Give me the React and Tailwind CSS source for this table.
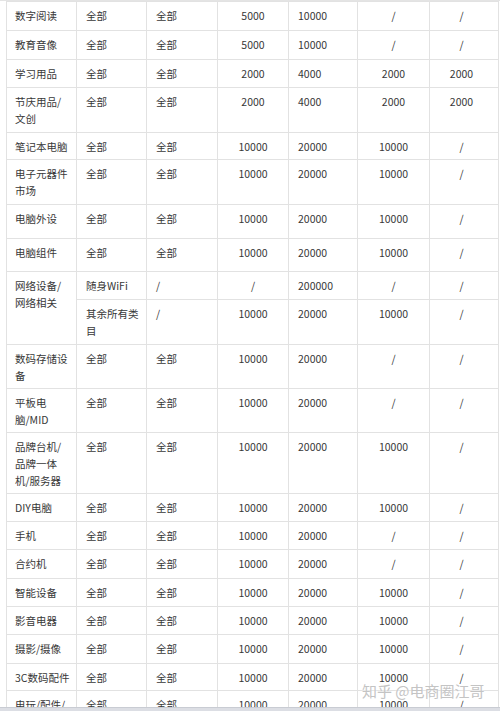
import React from "react";

const rows = [
  { h: "h-[29px]", c: ["数字阅读", "全部", "全部", "5000", "10000", "/", "/"] },
  { h: "h-[29px]", c: ["教育音像", "全部", "全部", "5000", "10000", "/", "/"] },
  { h: "h-[28px]", c: ["学习用品", "全部", "全部", "2000", "4000", "2000", "2000"] },
  { h: "h-[45px]", c: [["节庆用品/", "文创"], "全部", "全部", "2000", "4000", "2000", "2000"] },
  { h: "h-[27px]", c: ["笔记本电脑", "全部", "全部", "10000", "20000", "10000", "/"] },
  { h: "h-[45px]", c: [["电子元器件", "市场"], "全部", "全部", "10000", "20000", "10000", "/"] },
  { h: "h-[34px]", c: ["电脑外设", "全部", "全部", "10000", "20000", "10000", "/"] },
  { h: "h-[33px]", c: ["电脑组件", "全部", "全部", "10000", "20000", "10000", "/"] },
  { h: "h-[28px]", span: true, c: [["网络设备/", "网络相关"], "随身WiFi", "/", "/", "200000", "/", "/"] },
  { h: "h-[45px]", sub: true, c: [["其余所有类", "目"], "/", "10000", "20000", "10000", "/"] },
  { h: "h-[44px]", c: [["数码存储设", "备"], "全部", "全部", "10000", "20000", "/", "/"] },
  { h: "h-[44px]", c: [["平板电", "脑/MID"], "全部", "全部", "10000", "20000", "/", "/"] },
  { h: "h-[61px]", c: [["品牌台机/", "品牌一体", "机/服务器"], "全部", "全部", "10000", "20000", "10000", "/"] },
  { h: "h-[28px]", c: ["DIY电脑", "全部", "全部", "10000", "20000", "10000", "/"] },
  { h: "h-[28px]", c: ["手机", "全部", "全部", "10000", "20000", "/", "/"] },
  { h: "h-[29px]", c: ["合约机", "全部", "全部", "10000", "20000", "/", "/"] },
  { h: "h-[28px]", c: ["智能设备", "全部", "全部", "10000", "20000", "10000", "/"] },
  { h: "h-[28px]", c: ["影音电器", "全部", "全部", "10000", "20000", "10000", "/"] },
  { h: "h-[29px]", c: ["摄影/摄像", "全部", "全部", "10000", "20000", "10000", "/"] },
  { h: "h-[27px]", c: ["3C数码配件", "全部", "全部", "10000", "20000", "10000", "/"] },
  { h: "h-[28px]", c: [["电玩/配件/", "游戏"], "全部", "全部", "10000", "20000", "10000", "/"] },
];

const align = [
  "pl-[8px] text-left",
  "pl-[9px] text-left",
  "pl-[9px] text-left",
  "text-center",
  "pl-[9px] text-left",
  "text-center",
  "text-center pr-[5px]",
];

function Txt({ v }) {
  if (Array.isArray(v)) {
    return v.map((s, i) => (
      <React.Fragment key={i}>
        {i > 0 && <br />}
        {s}
      </React.Fragment>
    ));
  }
  return v;
}

export default function App() {
  return (
    <div
      className="w-[500px] h-[711px] overflow-hidden bg-white flex flex-col relative text-[#383838]"
      style={{ fontFamily: '"Noto Sans CJK SC", "Noto Sans", sans-serif' }}
    >
      <div className="h-[1px] bg-[#e4e4e4] shrink-0" />
      <div className="flex-1 overflow-hidden pl-[6px] pr-[2px]">
        <table className="table-fixed border-collapse w-[492px] text-[10.5px] leading-[17px]">
          <colgroup>
            <col className="w-[70px]" />
            <col className="w-[70px]" />
            <col className="w-[71px]" />
            <col className="w-[71px]" />
            <col className="w-[69px]" />
            <col className="w-[72px]" />
            <col className="w-[69px]" />
          </colgroup>
          <tbody>
            {rows.map((r, ri) => {
              if (r.sub) {
                return (
                  <tr key={ri} className={r.h}>
                    {r.c.map((v, ci) => (
                      <td
                        key={ci}
                        className={`border border-[#e2e2e2] align-top pt-[5px] whitespace-nowrap ${align[ci + 1]}`}
                      >
                        <Txt v={v} />
                      </td>
                    ))}
                  </tr>
                );
              }
              return (
                <tr key={ri} className={r.h}>
                  {r.c.map((v, ci) => (
                    <td
                      key={ci}
                      rowSpan={r.span && ci === 0 ? 2 : 1}
                      className={`border border-[#e2e2e2] align-top pt-[5px] whitespace-nowrap ${align[ci]}`}
                    >
                      <Txt v={v} />
                    </td>
                  ))}
                </tr>
              );
            })}
          </tbody>
        </table>
      </div>
      <div className="h-[4px] bg-[#dcdee4] shrink-0 border-t border-[#c9ccd3]" />
      <div className="absolute left-[362px] top-[681px] text-[15px] leading-[20px] text-[#c4c4c4] whitespace-nowrap [text-shadow:0_0_2px_#ffffff]">
        知乎 @电商圈江哥
      </div>
    </div>
  );
}
